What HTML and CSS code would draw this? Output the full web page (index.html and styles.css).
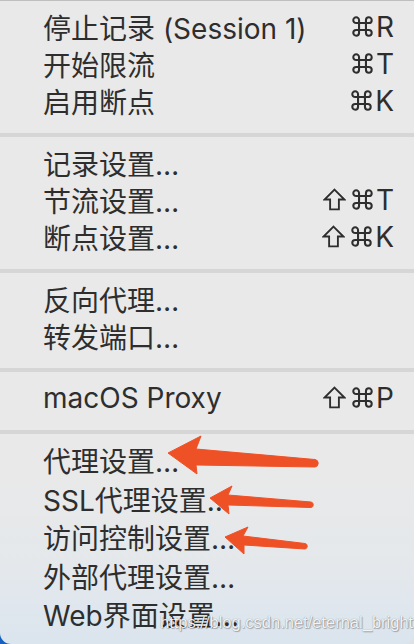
FILE: index.html
```html
<!DOCTYPE html>
<html lang="zh-CN">
<head>
<meta charset="utf-8">
<title>Charles 菜单</title>
<link rel="stylesheet" href="styles.css">
</head>
<body>
<svg width="0" height="0" class="defs">
	<symbol id="cmd" viewBox="0 0 20 20">
		<path d="M7 7H4.5A2.5 2.5 0 1 1 7 4.5V15.5A2.5 2.5 0 1 1 4.5 13H15.5A2.5 2.5 0 1 1 13 15.5V4.5A2.5 2.5 0 1 1 15.5 7Z" fill="none" stroke="currentColor" stroke-width="1.8"/>
	</symbol>
	<symbol id="shift" viewBox="0 0 22 22">
		<path d="M11 1.5L20.5 11H15.2V20.5H6.8V11H1.5Z" fill="none" stroke="currentColor" stroke-width="1.8" stroke-linejoin="miter"/>
	</symbol>
</svg>

<div class="menu">
	<div class="group">
		<div class="item"><span>停止记录 (Session 1)</span><span class="keys"><svg class="cmd"><use href="#cmd"/></svg>R</span></div>
		<div class="item"><span>开始限流</span><span class="keys"><svg class="cmd"><use href="#cmd"/></svg>T</span></div>
		<div class="item"><span>启用断点</span><span class="keys"><svg class="cmd"><use href="#cmd"/></svg>K</span></div>
	</div>
	<div class="sep"></div>
	<div class="group">
		<div class="item"><span>记录设置…</span></div>
		<div class="item"><span>节流设置…</span><span class="keys"><svg class="shift"><use href="#shift"/></svg><svg class="cmd"><use href="#cmd"/></svg>T</span></div>
		<div class="item"><span>断点设置…</span><span class="keys"><svg class="shift"><use href="#shift"/></svg><svg class="cmd"><use href="#cmd"/></svg>K</span></div>
	</div>
	<div class="sep"></div>
	<div class="group">
		<div class="item"><span>反向代理…</span></div>
		<div class="item"><span>转发端口…</span></div>
	</div>
	<div class="sep"></div>
	<div class="group">
		<div class="item"><span>macOS Proxy</span><span class="keys"><svg class="shift"><use href="#shift"/></svg><svg class="cmd"><use href="#cmd"/></svg>P</span></div>
	</div>
	<div class="sep"></div>
	<div class="group last">
		<div class="item"><span>代理设置…</span></div>
		<div class="item"><span>SSL代理设置…</span></div>
		<div class="item"><span>访问控制设置…</span></div>
		<div class="item"><span>外部代理设置…</span></div>
		<div class="item"><span>Web界面设置…</span></div>
	</div>
</div>

<!-- hand drawn annotation arrows -->
<svg class="arrows" width="414" height="644" viewBox="0 0 414 644">
	<path d="M168 453L201 436L196 449L315 459.5A3.8 3.8 0 0 1 315 467L196 465L197 474Z"/>
	<path d="M210 498L232 486L228 495L311 502A2.8 2.8 0 0 1 311 507.5L228 505L229 514Z"/>
	<path d="M225 537L248 527L243 536L305 543.5A2.8 2.8 0 0 1 305 549L244 545L244 554Z"/>
</svg>

<div class="watermark">https://blog.csdn.net/eternal_bright</div>
</body>
</html>
```

FILE: styles.css
```css
html, body {
	margin: 0;
	padding: 0;
}

body {
	width: 414px;
	height: 644px;
	overflow: hidden;
	position: relative;
	background: linear-gradient(to right, #1560c0 0, #1560c0 30px, #dde2e7 30px);
	font-family: Inter, "Noto Sans CJK SC", sans-serif;
}

.defs {
	position: absolute;
}

.menu {
	height: 643px;
	border-top: 1px solid #bfbfbf;
	border-radius: 0 0 11px 11px;
	background: linear-gradient(to bottom, #e9e9e9 0, #e9e9e9 72%, #e4e8ec 88%, #dbe5ee 100%);
	overflow: hidden;
}

.group {
	padding: 7px 0 14px;
}

.group.last {
	padding: 7px 0 0;
}

.sep {
	height: 4px;
	background: #d6d6d6;
}

.item {
	display: flex;
	justify-content: space-between;
	align-items: center;
	height: 37px;
	padding: 0 20px 0 43px;
	font-size: 28px;
	color: #2e2e2e;
	white-space: nowrap;
}

.group.last .item {
	height: 38.5px;
}

.keys {
	display: flex;
	align-items: center;
}

.keys svg {
	color: #2e2e2e;
}

.cmd {
	width: 23px;
	height: 23px;
	margin-right: 2px;
}

.shift {
	width: 23px;
	height: 23px;
	margin-right: 5px;
}

.arrows {
	position: absolute;
	left: 0;
	top: 0;
	pointer-events: none;
}

.arrows path {
	fill: #ef5127;
	stroke: #ef5127;
	stroke-width: 1;
	stroke-linejoin: round;
}

.watermark {
	position: absolute;
	left: 160px;
	top: 613px;
	font-family: "Liberation Sans", Arial, sans-serif;
	font-size: 16.5px;
	color: rgba(255, 255, 255, 0.92);
	text-shadow: 0 0 1px rgba(0, 0, 0, 0.45), 1px 1px 1px rgba(0, 0, 0, 0.25);
	white-space: nowrap;
}
```
